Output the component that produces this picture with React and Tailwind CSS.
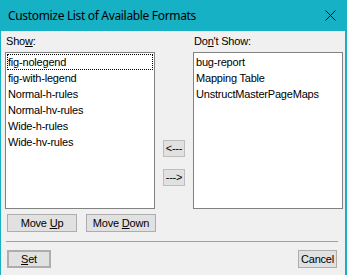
import React from "react";

const F = { fontFamily: '"Liberation Sans", Arial, sans-serif' };

function Btn({ children, className = "" }) {
  return (
    <div
      className={
        "flex items-center justify-center bg-[#e1e1e1] border border-[#adadad] text-[11px] text-black tracking-[-0.2px] leading-none " +
        className
      }
    >
      {children}
    </div>
  );
}

function Item({ children, focus }) {
  return (
    <div
      className={
        "h-[16px] flex items-center pl-[0px] text-[11px] leading-none tracking-[-0.2px] text-black border " +
        (focus ? "border-dotted border-black" : "border-transparent")
      }
    >
      {children}
    </div>
  );
}

export default function App() {
  return (
    <div
      className="w-[347px] h-[275px] flex flex-col bg-[#f0f0f0] border-l border-r-2 border-[#17b1c6] select-none"
      style={F}
    >
      <div className="h-[31px] shrink-0 bg-[#17b1c6] flex items-center justify-between pl-[7px] pr-[9px]">
        <span
          className="text-[12px] text-black leading-none tracking-[-0.33px]"
          style={{ fontFamily: '"Noto Sans", "Open Sans", sans-serif' }}
        >
          Customize List of Available Formats
        </span>
        <svg width="11" height="11" viewBox="0 0 11 11" className="mb-[1px]">
          <path d="M0.5 0.5 L10.5 10.5 M10.5 0.5 L0.5 10.5" stroke="#111" strokeWidth="1" fill="none" />
        </svg>
      </div>

      <div className="flex-1 flex flex-col pl-[4px] pr-[2px]">
        <div className="flex pt-[4px]">
          <div className="w-[150px] flex flex-col">
            <div className="h-[13px] leading-[13px] mb-[4px] pl-[1px] text-[11px] tracking-[-0.2px] text-black">
              Sho<span className="underline">w</span>:
            </div>
            <div className="h-[157px] bg-white border border-[#828282] p-[1px]">
              <Item focus>fig-nolegend</Item>
              <Item>fig-with-legend</Item>
              <Item>Normal-h-rules</Item>
              <Item>Normal-hv-rules</Item>
              <Item>Wide-h-rules</Item>
              <Item>Wide-hv-rules</Item>
            </div>
          </div>

          <div className="w-[38px] flex flex-col items-center pt-[105px] gap-[12px]">
            <Btn className="w-[22px] h-[17px] border-[#bdbdbd]">&lt;---</Btn>
            <Btn className="w-[22px] h-[17px] border-[#bdbdbd]">---&gt;</Btn>
          </div>

          <div className="w-[150px] flex flex-col">
            <div className="h-[13px] leading-[13px] mb-[4px] pl-[1px] text-[11px] tracking-[-0.2px] text-black">
              Do<span className="underline">n</span>'t Show:
            </div>
            <div className="h-[157px] bg-white border border-[#828282] p-[1px]">
              <Item>bug-report</Item>
              <Item>Mapping Table</Item>
              <Item>UnstructMasterPageMaps</Item>
            </div>
          </div>
        </div>

        <div className="flex gap-[9px] pl-[2px] mt-[5px]">
          <Btn className="w-[70px] h-[18px]">
            Move&nbsp;<span className="underline">U</span>p
          </Btn>
          <Btn className="w-[70px] h-[18px]">
            Move&nbsp;<span className="underline">D</span>own
          </Btn>
        </div>

        <div className="mt-[9px] ml-[1px] mr-[5px] h-[1px] bg-[#a0a0a0]" />

        <div className="flex justify-between pl-[2px] pr-[6px] mt-[8px]">
          <Btn className="w-[44px] h-[18px] border-2 border-[#0078d7]">
            <span className="underline">S</span>et
          </Btn>
          <Btn className="w-[39px] h-[18px]">Cancel</Btn>
        </div>
      </div>
    </div>
  );
}
